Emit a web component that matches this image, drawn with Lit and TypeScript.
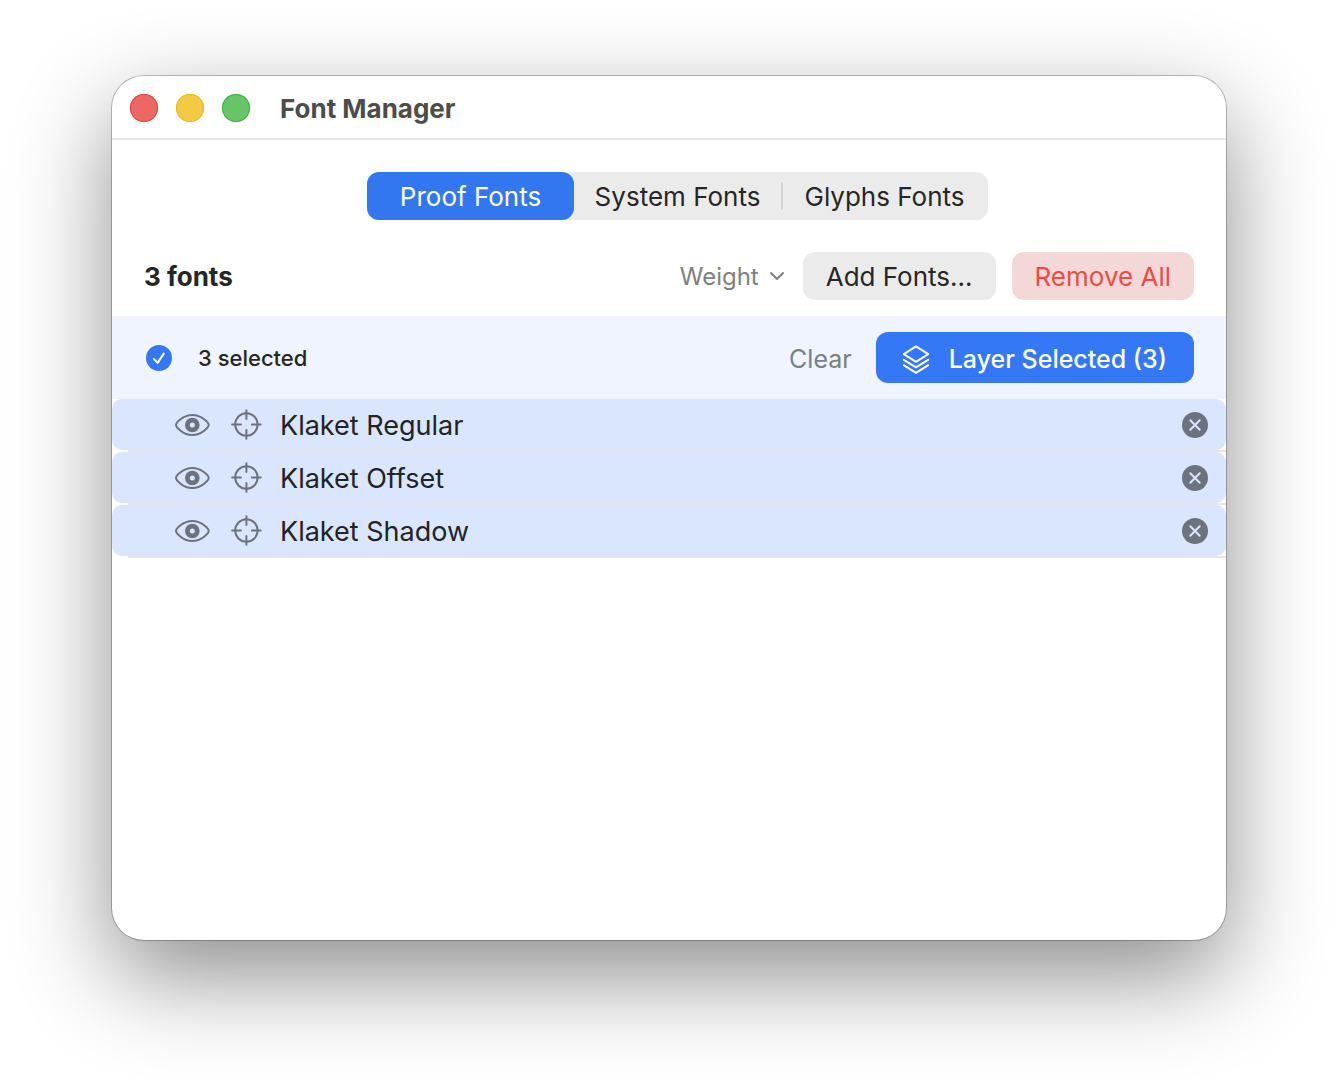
import { LitElement, html, css } from "lit";
import { customElement, state } from "lit/decorators.js";

interface FontItem {
  name: string;
}

const TABS = ["Proof Fonts", "System Fonts", "Glyphs Fonts"];

const eyeIcon = html`<svg viewBox="0 0 36 24" width="36" height="24" aria-hidden="true">
  <path d="M2 12C2 10.2 8.6 2 18.3 2S34.7 10.2 34.7 12 28 22 18.3 22 2 13.8 2 12Z" fill="none" stroke="currentColor" stroke-width="2" />
  <circle cx="18.3" cy="12" r="4.9" fill="none" stroke="currentColor" stroke-width="4.8" />
</svg>`;

const targetIcon = html`<svg viewBox="0 0 32 32" width="32" height="32" aria-hidden="true">
  <g fill="none" stroke="currentColor" stroke-width="2" stroke-linecap="round">
    <circle cx="16.4" cy="15.5" r="11.2" />
    <path d="M16.4 1.2V10M16.4 21V29.8M2.1 15.5H10.9M21.9 15.5H30.7" />
  </g>
</svg>`;

const removeIcon = html`<svg viewBox="0 0 26 26" width="26" height="26" aria-hidden="true">
  <circle cx="13" cy="13" r="13" fill="#6d737e" />
  <path d="M8.3 8.3L17.7 17.7M17.7 8.3L8.3 17.7" fill="none" stroke="#dae6fd" stroke-width="2" stroke-linecap="round" />
</svg>`;

const layersIcon = html`<svg viewBox="0 0 28 30" width="28" height="30" aria-hidden="true">
  <g fill="none" stroke="currentColor" stroke-width="2" stroke-linecap="round" stroke-linejoin="round">
    <path d="M14 2.4L26.2 10.2L14 17.8L1.8 10.2Z" />
    <path d="M1.8 15.8L14 23.4L26.2 15.8" />
    <path d="M1.8 21.2L14 28.8L26.2 21.2" />
  </g>
</svg>`;

@customElement("font-row")
class FontRow extends LitElement {
  static properties = { name: {} };
  declare name: string;

  static styles = css`
    :host {
      display: block;
    }
    .row {
      display: flex;
      align-items: center;
      height: 51px;
      padding: 0 18px 0 62px;
      background: #dae6fd;
      border-radius: 10px;
      color: #6d737e;
    }
    .icon {
      display: flex;
      padding: 0;
      border: 0;
      background: none;
      color: inherit;
    }
    .target {
      margin-left: 20px;
    }
    .name {
      flex: 1;
      margin-left: 18px;
      padding-top: 3px;
      font-size: 27px;
      line-height: 36px;
      color: #222325;
    }
    .rule {
      height: 2px;
      margin-left: 16px;
      background: #e5e5e5;
    }
  `;

  render() {
    return html`
      <div class="row">
        <button class="icon" type="button" aria-label="Toggle visibility">${eyeIcon}</button>
        <button class="icon target" type="button" aria-label="Focus font">${targetIcon}</button>
        <span class="name">${this.name}</span>
        <button class="icon" type="button" aria-label="Remove font">${removeIcon}</button>
      </div>
      <div class="rule"></div>
    `;
  }
}

@customElement("app-root")
class AppRoot extends LitElement {
  @state() private tab = 0;
  @state() private fonts: FontItem[] = [
    { name: "Klaket Regular" },
    { name: "Klaket Offset" },
    { name: "Klaket Shadow" },
  ];

  static styles = css`
    :host {
      display: flex;
      box-sizing: border-box;
      min-height: 100vh;
      padding: 76px 112px 148px;
      overflow: hidden;
      background: #fff;
      font-family: Inter, "Liberation Sans", sans-serif;
      font-size: 26px;
      line-height: 32px;
      color: #262626;
    }
    button,
    select {
      font: inherit;
      border: 0;
    }
    .window {
      flex: 1;
      min-width: 0;
      overflow: hidden;
      background: #fff;
      border-radius: 32px;
      box-shadow:
        0 0 0 1px rgba(0, 0, 0, 0.24),
        0 36px 96px rgba(0, 0, 0, 0.45);
    }
    .titlebar {
      display: flex;
      align-items: center;
      gap: 18px;
      height: 64px;
      padding: 0 18px;
      box-shadow: inset 0 -2px #e5e5e5;
    }
    .light {
      width: 28px;
      height: 28px;
      padding: 0;
      border-radius: 50%;
    }
    .close {
      background: #ed6765;
      box-shadow: inset 0 0 0 1px #e2463f;
    }
    .minimize {
      background: #f3ca44;
      box-shadow: inset 0 0 0 1px #ecb920;
    }
    .zoom {
      background: #66c567;
      box-shadow: inset 0 0 0 1px #3cb43c;
    }
    .title {
      margin: 0 0 0 12px;
      padding-top: 2px;
      font-size: 26px;
      font-weight: 700;
      color: #4c4c4c;
    }
    .tabs {
      display: flex;
      justify-content: center;
      margin: 0;
      padding: 32px 0 32px 17px;
      border: 0;
    }
    .segments {
      display: grid;
      grid-template-columns: repeat(3, 207px);
      background: #ebebeb;
      border-radius: 12px;
    }
    .segment {
      display: flex;
      align-items: center;
      justify-content: center;
      box-sizing: border-box;
      height: 48px;
      padding-top: 2px;
      border-radius: 12px;
    }
    .segment + .segment:last-child {
      background: linear-gradient(#d5d5d5, #d5d5d5) left center / 2px 28px no-repeat;
    }
    .segment.active {
      background: #3377f0;
      color: #fff;
    }
    .radio {
      appearance: none;
      width: 0;
      height: 0;
      margin: 0;
    }
    .toolbar {
      display: flex;
      align-items: center;
      gap: 16px;
      padding: 0 32px 16px;
    }
    .count {
      flex: 1;
      margin: 0;
      padding-top: 2px;
      font-size: 26px;
      font-weight: 700;
    }
    .sort {
      display: flex;
      align-items: center;
      gap: 10px;
      padding-right: 2px;
      color: #808080;
    }
    .select {
      appearance: none;
      padding: 2px 0 0;
      background: none;
      font-size: 24px;
      color: inherit;
    }
    .button {
      height: 48px;
      padding: 2px 23px 0;
      border-radius: 12px;
      background: #ebebeb;
      color: #262626;
      white-space: nowrap;
    }
    .danger {
      background: #f4d7d7;
      color: #ee4b45;
    }
    .selection {
      display: flex;
      align-items: center;
      gap: 24px;
      padding: 16px 32px 16px 34px;
      background: #eff4fe;
    }
    .all {
      display: flex;
      flex: 1;
      align-items: center;
      gap: 26px;
      font-size: 22px;
      font-weight: 500;
    }
    .tick {
      display: grid;
      width: 26px;
      height: 26px;
    }
    .tick > * {
      grid-area: 1 / 1;
    }
    .box {
      appearance: none;
      margin: 0;
      border-radius: 50%;
      background: #3478f6;
    }
    .mark {
      pointer-events: none;
    }
    .clear {
      padding: 2px 0 0;
      background: none;
      font-size: 25px;
      color: #7c7f86;
    }
    .primary {
      display: flex;
      align-items: center;
      gap: 19px;
      height: 51px;
      padding: 2px 27px 0 26px;
      background: #3478f6;
      color: #fff;
      font-size: 25px;
      font-weight: 500;
    }
    .list {
      margin: 0;
      padding: 0;
      list-style: none;
    }
  `;

  render() {
    return html`
      <main class="window">
        <header class="titlebar">
          <button class="light close" type="button" aria-label="Close"></button>
          <button class="light minimize" type="button" aria-label="Minimize"></button>
          <button class="light zoom" type="button" aria-label="Zoom"></button>
          <h1 class="title">Font Manager</h1>
        </header>

        <fieldset class="tabs" aria-label="Font source">
          <div class="segments">
            ${TABS.map(
              (label, i) => html`<label class="segment ${i === this.tab ? "active" : ""}">
                <input class="radio" type="radio" name="source" .checked=${i === this.tab} @change=${() => (this.tab = i)} />${label}
              </label>`
            )}
          </div>
        </fieldset>

        <div class="toolbar">
          <h2 class="count">${this.fonts.length} fonts</h2>
          <label class="sort">
            <select class="select" aria-label="Sort by">
              <option>Weight</option>
            </select>
            <svg viewBox="0 0 16 10" width="16" height="10" aria-hidden="true">
              <path d="M2 2L8 8L14 2" fill="none" stroke="currentColor" stroke-width="2" stroke-linecap="round" stroke-linejoin="round" />
            </svg>
          </label>
          <button class="button" type="button">Add Fonts…</button>
          <button class="button danger" type="button">Remove All</button>
        </div>

        <div class="selection">
          <label class="all">
            <span class="tick">
              <input class="box" type="checkbox" .checked=${true} />
              <svg class="mark" viewBox="0 0 26 26" width="26" height="26" aria-hidden="true">
                <path d="M8 14L11.6 17.9L17.8 8.6" fill="none" stroke="#fff" stroke-width="2" stroke-linecap="round" stroke-linejoin="round" />
              </svg>
            </span>
            <span>${this.fonts.length} selected</span>
          </label>
          <button class="clear" type="button">Clear</button>
          <button class="button primary" type="button">
            ${layersIcon}<span>Layer Selected (${this.fonts.length})</span>
          </button>
        </div>

        <ul class="list">
          ${this.fonts.map((font) => html`<li><font-row .name=${font.name}></font-row></li>`)}
        </ul>
      </main>
    `;
  }
}
